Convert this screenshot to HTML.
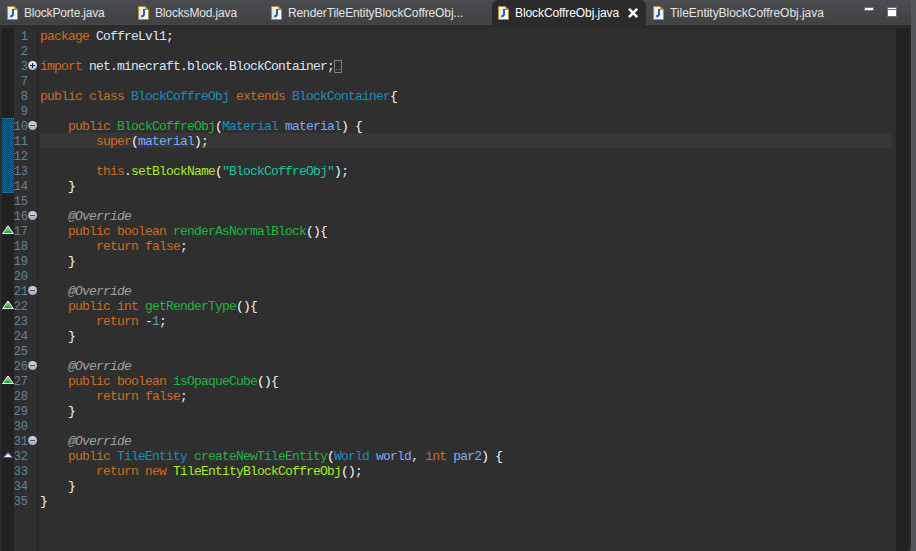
<!DOCTYPE html>
<html><head><meta charset="utf-8"><title>Eclipse</title>
<style>
html,body{margin:0;padding:0;}
body{width:916px;height:551px;overflow:hidden;position:relative;background:#2f2f2f;font-family:"Liberation Sans",sans-serif;}
#edge{position:absolute;left:0;top:0;width:916px;height:551px;background:#51575a;}
#win{position:absolute;left:0;top:0;width:911px;height:551px;background:#2f2f2f;border-radius:0 5px 3px 0;overflow:hidden;}
#tabbar{position:absolute;left:0;top:0;width:911px;height:25px;background:linear-gradient(#4a4c4f,#3f4143);}
#tabline{position:absolute;left:0;top:24px;width:911px;height:1px;background:#46484a;}
#band{position:absolute;left:0;top:25px;width:911px;height:3px;background:#2b2b2b;}
#act{position:absolute;left:492px;top:0;width:154px;height:26px;background:#2b2b2b;border-radius:6px 6px 0 0;}
.tab{position:absolute;top:5px;height:16px;line-height:16px;font-size:12px;color:#e4e4e4;white-space:nowrap;}
.tab.on{color:#ffffff;}
.ico{position:absolute;top:6px;}
#lstrip{position:absolute;left:0;top:25px;width:2px;height:526px;background:#2b2b2b;}
#lruler{position:absolute;left:2px;top:28px;width:12px;height:523px;background:#222222;}
#rruler{position:absolute;left:896px;top:28px;width:13px;height:523px;background:#222222;}
#rstrip{position:absolute;left:909px;top:25px;width:2px;height:526px;background:#2a2a2a;}
#sep{position:absolute;left:37px;top:28px;width:1px;height:523px;background:#262626;}
#cur{position:absolute;left:40px;top:133px;width:852px;height:15px;background:#373737;}
#range{position:absolute;left:2px;top:117px;width:12px;height:77px;}
.ln{position:absolute;left:0;width:27.7px;height:15px;line-height:15px;text-align:right;font-family:"Liberation Mono",monospace;font-size:12px;letter-spacing:-0.2px;color:#61859a;margin-top:2px;}
.cl{position:absolute;left:40px;height:15px;line-height:15px;white-space:pre;font-family:"Liberation Mono",monospace;font-size:13px;letter-spacing:-0.8px;color:#d9e8f7;margin-top:1px;}
.fold{position:absolute;left:27px;}
.k{color:#cc6c1d}.d{color:#d9e8f7}.c{color:#1290c3}.m{color:#1eb540}.mc{color:#a7ec21}.p{color:#79abff}.s{color:#17c6a3}.n{color:#6897bb}.a{color:#a0a0a0;font-style:italic}.b{color:#f9faf4}.o{color:#e6e6fa}
.box{display:inline-block;position:relative;width:6px;height:11px;border:1px solid #808080;vertical-align:top;margin-top:1px;margin-left:0;}
.box i{position:absolute;top:8px;width:1px;height:1px;background:#808080;}
.box i:first-child{left:1px}.box i:last-child{left:4px}
.mk{position:absolute;left:2px;}
</style></head><body>
<svg width="0" height="0" style="position:absolute">
<defs>
<linearGradient id="fg" x1="0" y1="0" x2="0" y2="1"><stop offset="0" stop-color="#e8f0fa"/><stop offset="1" stop-color="#a9bcd6"/></linearGradient>
<linearGradient id="fm" x1="0" y1="0" x2="0" y2="1"><stop offset="0" stop-color="#d0d4db"/><stop offset="1" stop-color="#a6adba"/></linearGradient>
<linearGradient id="gt" x1="0" y1="0" x2="0" y2="1"><stop offset="0" stop-color="#a8dc80"/><stop offset="1" stop-color="#0f9a35"/></linearGradient>
<linearGradient id="pg" x1="0" y1="0" x2="1" y2="0"><stop offset="0" stop-color="#dde7f6"/><stop offset="1" stop-color="#ffffff"/></linearGradient>
<pattern id="chk" width="2" height="2" patternUnits="userSpaceOnUse"><rect width="2" height="2" fill="#272524"/><rect x="1" y="0" width="1" height="1" fill="#19729a"/><rect x="0" y="1" width="1" height="1" fill="#19729a"/></pattern>

</defs></svg>
<div id="edge"></div>
<div id="win">
<div id="tabbar"></div>
<div id="tabline"></div>
<div id="band"></div>
<div id="act"></div>

<svg class="ico" style="left:7px" width="11" height="14" viewBox="0 0 11 14"><path d="M0.5 0.5H7.5L10.5 3.5V13.5H0.5Z" fill="url(#pg)" stroke="#b48d32" stroke-width="1"/><path d="M7.5 0.5V3.5H10.5Z" fill="#c9a046" stroke="#b48d32" stroke-width="1" stroke-linejoin="round"/><path d="M6 3V8Q6 10.2 3.2 10.5" fill="none" stroke="#1f5a96" stroke-width="1.9"/></svg>
<div class="tab" style="left:24px;letter-spacing:-0.19px" id="t1">BlockPorte.java</div>
<svg class="ico" style="left:138px" width="11" height="14" viewBox="0 0 11 14"><path d="M0.5 0.5H7.5L10.5 3.5V13.5H0.5Z" fill="url(#pg)" stroke="#b48d32" stroke-width="1"/><path d="M7.5 0.5V3.5H10.5Z" fill="#c9a046" stroke="#b48d32" stroke-width="1" stroke-linejoin="round"/><path d="M6 3V8Q6 10.2 3.2 10.5" fill="none" stroke="#1f5a96" stroke-width="1.9"/></svg>
<div class="tab" style="left:155px;letter-spacing:-0.15px" id="t2">BlocksMod.java</div>
<svg class="ico" style="left:271px" width="11" height="14" viewBox="0 0 11 14"><path d="M0.5 0.5H7.5L10.5 3.5V13.5H0.5Z" fill="url(#pg)" stroke="#b48d32" stroke-width="1"/><path d="M7.5 0.5V3.5H10.5Z" fill="#c9a046" stroke="#b48d32" stroke-width="1" stroke-linejoin="round"/><path d="M6 3V8Q6 10.2 3.2 10.5" fill="none" stroke="#1f5a96" stroke-width="1.9"/></svg>
<div class="tab" style="left:288px;letter-spacing:-0.11px" id="t3">RenderTileEntityBlockCoffreObj...</div>
<svg class="ico" style="left:498px" width="11" height="14" viewBox="0 0 11 14"><path d="M0.5 0.5H7.5L10.5 3.5V13.5H0.5Z" fill="url(#pg)" stroke="#b48d32" stroke-width="1"/><path d="M7.5 0.5V3.5H10.5Z" fill="#c9a046" stroke="#b48d32" stroke-width="1" stroke-linejoin="round"/><path d="M6 3V8Q6 10.2 3.2 10.5" fill="none" stroke="#1f5a96" stroke-width="1.9"/></svg>
<div class="tab on" style="left:515px;letter-spacing:-0.09px" id="t4">BlockCoffreObj.java</div>
<svg style="position:absolute;left:628px;top:8px" width="11" height="11" viewBox="0 0 11 11"><path d="M1 0.8L9.2 9.2M9.2 0.8L1 9.2" stroke="#ffffff" stroke-width="2.5"/></svg>
<svg class="ico" style="left:653px" width="11" height="14" viewBox="0 0 11 14"><path d="M0.5 0.5H7.5L10.5 3.5V13.5H0.5Z" fill="url(#pg)" stroke="#b48d32" stroke-width="1"/><path d="M7.5 0.5V3.5H10.5Z" fill="#c9a046" stroke="#b48d32" stroke-width="1" stroke-linejoin="round"/><path d="M6 3V8Q6 10.2 3.2 10.5" fill="none" stroke="#1f5a96" stroke-width="1.9"/></svg>
<div class="tab" style="left:670px;letter-spacing:-0.03px" id="t5">TileEntityBlockCoffreObj.java</div>

<div style="position:absolute;left:864px;top:7px;width:10px;height:4px;background:#6f7174"></div><div style="position:absolute;left:865px;top:8px;width:8px;height:2px;background:#fff"></div>
<div style="position:absolute;left:887px;top:7px;width:10px;height:10px;background:#6f7174"></div><div style="position:absolute;left:888px;top:8px;width:8px;height:1px;background:#fff"></div>
<div style="position:absolute;left:888px;top:10px;width:8px;height:6px;background:#fff"></div>

<div id="lstrip"></div>
<div id="lruler"></div>
<div id="rruler"></div>
<div id="rstrip"></div>
<div id="sep"></div>
<div id="cur"></div>
<svg id="range" width="12" height="77"><rect y="0" width="12" height="77" fill="#1d1613"/><rect y="1" width="12" height="75" fill="url(#chk)"/><rect y="1" width="12" height="1" fill="#19729a"/><rect y="75" width="12" height="1" fill="#19729a"/></svg>

<svg class="mk" style="top:225px" width="12" height="10" viewBox="0 0 12 10"><path d="M6 1L11.3 8.5H0.7Z" fill="url(#gt)" stroke="#ffffff" stroke-width="1" stroke-linejoin="round"/></svg>
<svg class="mk" style="top:300px" width="12" height="10" viewBox="0 0 12 10"><path d="M6 1L11.3 8.5H0.7Z" fill="url(#gt)" stroke="#ffffff" stroke-width="1" stroke-linejoin="round"/></svg>
<svg class="mk" style="top:375px" width="12" height="10" viewBox="0 0 12 10"><path d="M6 1L11.3 8.5H0.7Z" fill="url(#gt)" stroke="#ffffff" stroke-width="1" stroke-linejoin="round"/></svg>
<svg class="mk" style="top:451px" width="12" height="9" viewBox="0 0 12 9"><path d="M6 1.3L10.6 6.5H1.4Z" fill="#ffffff" stroke="#6243c4" stroke-width="1.1" stroke-linejoin="round"/></svg>

<div class="ln" style="top:28px">1</div>
<div class="cl" style="top:28px"><span class="k">package</span><span class="d"> CoffreLvl1</span><span class="o">;</span></div>
<div class="ln" style="top:43px">2</div>
<div class="ln" style="top:58px">3</div>
<svg class="fold" style="top:60px" width="11" height="11" viewBox="0 0 11 11"><circle cx="5.6" cy="5.5" r="4.45" fill="url(#fg)"/><rect x="3" y="5" width="5" height="1" fill="#1c2340"/><rect x="5" y="3" width="1" height="5" fill="#1c2340"/></svg>
<div class="cl" style="top:58px"><span class="k">import</span><span class="d"> net.minecraft.block.BlockContainer</span><span class="o">;</span><span class="box"><i></i><i></i></span></div>
<div class="ln" style="top:73px">7</div>
<div class="ln" style="top:88px">8</div>
<div class="cl" style="top:88px"><span class="k">public class </span><span class="c">BlockCoffreObj</span><span class="k"> extends </span><span class="c">BlockContainer</span><span class="b">{</span></div>
<div class="ln" style="top:103px">9</div>
<div class="ln" style="top:118px">10</div>
<svg class="fold" style="top:120px" width="11" height="11" viewBox="0 0 11 11"><circle cx="5.6" cy="5.5" r="4.45" fill="url(#fm)"/><rect x="3" y="5" width="5" height="1" fill="#47507a"/></svg>
<div class="cl" style="top:118px"><span class="d">    </span><span class="k">public </span><span class="m">BlockCoffreObj</span><span class="b">(</span><span class="c">Material </span><span class="p">material</span><span class="b">) {</span></div>
<div class="ln" style="top:133px">11</div>
<div class="cl" style="top:133px"><span class="d">        </span><span class="k">super</span><span class="b">(</span><span class="p">material</span><span class="b">)</span><span class="o">;</span></div>
<div class="ln" style="top:148px">12</div>
<div class="ln" style="top:163px">13</div>
<div class="cl" style="top:163px"><span class="d">        </span><span class="k">this</span><span class="o">.</span><span class="mc">setBlockName</span><span class="b">(</span><span class="s">&quot;BlockCoffreObj&quot;</span><span class="b">)</span><span class="o">;</span></div>
<div class="ln" style="top:178px">14</div>
<div class="cl" style="top:178px"><span class="d">    </span><span class="b">}</span></div>
<div class="ln" style="top:193px">15</div>
<div class="ln" style="top:208px">16</div>
<svg class="fold" style="top:210px" width="11" height="11" viewBox="0 0 11 11"><circle cx="5.6" cy="5.5" r="4.45" fill="url(#fm)"/><rect x="3" y="5" width="5" height="1" fill="#47507a"/></svg>
<div class="cl" style="top:208px"><span class="d">    </span><span class="a">@Override</span></div>
<div class="ln" style="top:223px">17</div>
<div class="cl" style="top:223px"><span class="d">    </span><span class="k">public boolean </span><span class="m">renderAsNormalBlock</span><span class="b">(){</span></div>
<div class="ln" style="top:238px">18</div>
<div class="cl" style="top:238px"><span class="d">        </span><span class="k">return false</span><span class="o">;</span></div>
<div class="ln" style="top:253px">19</div>
<div class="cl" style="top:253px"><span class="d">    </span><span class="b">}</span></div>
<div class="ln" style="top:268px">20</div>
<div class="ln" style="top:283px">21</div>
<svg class="fold" style="top:285px" width="11" height="11" viewBox="0 0 11 11"><circle cx="5.6" cy="5.5" r="4.45" fill="url(#fm)"/><rect x="3" y="5" width="5" height="1" fill="#47507a"/></svg>
<div class="cl" style="top:283px"><span class="d">    </span><span class="a">@Override</span></div>
<div class="ln" style="top:298px">22</div>
<div class="cl" style="top:298px"><span class="d">    </span><span class="k">public int </span><span class="m">getRenderType</span><span class="b">(){</span></div>
<div class="ln" style="top:313px">23</div>
<div class="cl" style="top:313px"><span class="d">        </span><span class="k">return </span><span class="o">-</span><span class="n">1</span><span class="o">;</span></div>
<div class="ln" style="top:328px">24</div>
<div class="cl" style="top:328px"><span class="d">    </span><span class="b">}</span></div>
<div class="ln" style="top:343px">25</div>
<div class="ln" style="top:358px">26</div>
<svg class="fold" style="top:360px" width="11" height="11" viewBox="0 0 11 11"><circle cx="5.6" cy="5.5" r="4.45" fill="url(#fm)"/><rect x="3" y="5" width="5" height="1" fill="#47507a"/></svg>
<div class="cl" style="top:358px"><span class="d">    </span><span class="a">@Override</span></div>
<div class="ln" style="top:373px">27</div>
<div class="cl" style="top:373px"><span class="d">    </span><span class="k">public boolean </span><span class="m">isOpaqueCube</span><span class="b">(){</span></div>
<div class="ln" style="top:388px">28</div>
<div class="cl" style="top:388px"><span class="d">        </span><span class="k">return false</span><span class="o">;</span></div>
<div class="ln" style="top:403px">29</div>
<div class="cl" style="top:403px"><span class="d">    </span><span class="b">}</span></div>
<div class="ln" style="top:418px">30</div>
<div class="ln" style="top:433px">31</div>
<svg class="fold" style="top:435px" width="11" height="11" viewBox="0 0 11 11"><circle cx="5.6" cy="5.5" r="4.45" fill="url(#fm)"/><rect x="3" y="5" width="5" height="1" fill="#47507a"/></svg>
<div class="cl" style="top:433px"><span class="d">    </span><span class="a">@Override</span></div>
<div class="ln" style="top:448px">32</div>
<div class="cl" style="top:448px"><span class="d">    </span><span class="k">public </span><span class="c">TileEntity </span><span class="m">createNewTileEntity</span><span class="b">(</span><span class="c">World </span><span class="p">world</span><span class="o">, </span><span class="k">int </span><span class="p">par2</span><span class="b">) {</span></div>
<div class="ln" style="top:463px">33</div>
<div class="cl" style="top:463px"><span class="d">        </span><span class="k">return new </span><span class="mc">TileEntityBlockCoffreObj</span><span class="b">()</span><span class="o">;</span></div>
<div class="ln" style="top:478px">34</div>
<div class="cl" style="top:478px"><span class="d">    </span><span class="b">}</span></div>
<div class="ln" style="top:493px">35</div>
<div class="cl" style="top:493px"><span class="b">}</span></div>
</div>
</body></html>
